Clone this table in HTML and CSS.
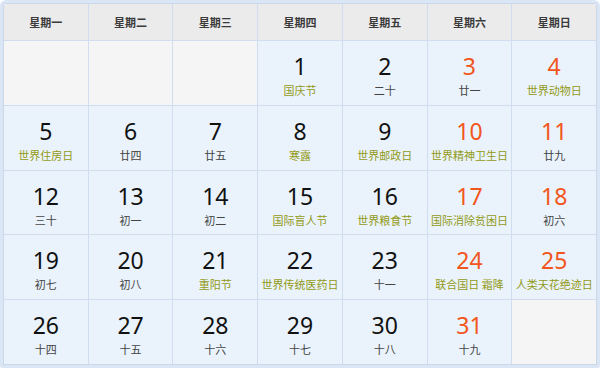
FILE: index.html
```html
<!DOCTYPE html>
<html lang="zh">
<head>
<meta charset="utf-8">
<link rel="stylesheet" href="styles.css">
</head>
<body>
<div class="cal">
  <div class="head">星期一</div>
  <div class="head">星期二</div>
  <div class="head">星期三</div>
  <div class="head">星期四</div>
  <div class="head">星期五</div>
  <div class="head">星期六</div>
  <div class="head">星期日</div>

  <div class="cell empty"></div>
  <div class="cell empty"></div>
  <div class="cell empty"></div>
  <div class="cell"><span class="num">1</span><span class="fest">国庆节</span></div>
  <div class="cell"><span class="num">2</span><span class="lunar">二十</span></div>
  <div class="cell"><span class="num we">3</span><span class="lunar">廿一</span></div>
  <div class="cell"><span class="num we">4</span><span class="fest">世界动物日</span></div>

  <div class="cell"><span class="num">5</span><span class="fest">世界住房日</span></div>
  <div class="cell"><span class="num">6</span><span class="lunar">廿四</span></div>
  <div class="cell"><span class="num">7</span><span class="lunar">廿五</span></div>
  <div class="cell"><span class="num">8</span><span class="fest">寒露</span></div>
  <div class="cell"><span class="num">9</span><span class="fest">世界邮政日</span></div>
  <div class="cell"><span class="num we">10</span><span class="fest">世界精神卫生日</span></div>
  <div class="cell"><span class="num we">11</span><span class="lunar">廿九</span></div>

  <div class="cell"><span class="num">12</span><span class="lunar">三十</span></div>
  <div class="cell"><span class="num">13</span><span class="lunar">初一</span></div>
  <div class="cell"><span class="num">14</span><span class="lunar">初二</span></div>
  <div class="cell"><span class="num">15</span><span class="fest">国际盲人节</span></div>
  <div class="cell"><span class="num">16</span><span class="fest">世界粮食节</span></div>
  <div class="cell"><span class="num we">17</span><span class="fest">国际消除贫困日</span></div>
  <div class="cell"><span class="num we">18</span><span class="lunar">初六</span></div>

  <div class="cell"><span class="num">19</span><span class="lunar">初七</span></div>
  <div class="cell"><span class="num">20</span><span class="lunar">初八</span></div>
  <div class="cell"><span class="num">21</span><span class="fest">重阳节</span></div>
  <div class="cell"><span class="num">22</span><span class="fest">世界传统医药日</span></div>
  <div class="cell"><span class="num">23</span><span class="lunar">十一</span></div>
  <div class="cell"><span class="num we">24</span><span class="fest">联合国日 霜降</span></div>
  <div class="cell"><span class="num we">25</span><span class="fest">人类天花绝迹日</span></div>

  <div class="cell"><span class="num">26</span><span class="lunar">十四</span></div>
  <div class="cell"><span class="num">27</span><span class="lunar">十五</span></div>
  <div class="cell"><span class="num">28</span><span class="lunar">十六</span></div>
  <div class="cell"><span class="num">29</span><span class="lunar">十七</span></div>
  <div class="cell"><span class="num">30</span><span class="lunar">十八</span></div>
  <div class="cell"><span class="num we">31</span><span class="lunar">十九</span></div>
  <div class="cell empty"></div>
</div>
</body>
</html>
```
FILE: styles.css
```css
* { box-sizing: border-box; }
html, body { margin: 0; padding: 0; background: #ffffff; }
body { width: 600px; height: 368px; overflow: hidden; }
.cal {
  width: 600px;
  height: 368px;
  display: grid;
  grid-template-columns: repeat(7, 1fr);
  grid-template-rows: 36px repeat(5, 1fr);
  gap: 1px;
  background: #d0ddee;
  border: 3px solid #dbe6f4;
  border-radius: 6px 6px 2px 2px;
  box-shadow: inset 0 0 0 1px #c9d8ec;
  padding: 1px;
  font-family: "Noto Sans", "Noto Sans CJK SC", sans-serif;
}
.head {
  background: #ebebeb;
  display: flex;
  align-items: center;
  justify-content: center;
  font-family: "Noto Sans CJK SC", sans-serif;
  font-size: 11px;
  font-weight: bold;
  color: #3a3a3a;
}
.cell {
  background: #eaf3fb;
  display: flex;
  flex-direction: column;
  align-items: center;
  padding-top: 9px;
}
.cell.empty { background: #f5f5f5; }
.num {
  font-size: 23px;
  line-height: 32px;
  color: #111111;
}
.num.we { color: #f2561c; }
.fest, .lunar {
  font-family: "Noto Sans CJK SC", sans-serif;
  font-size: 11px;
  line-height: 16px;
}
.fest { color: #929a18; }
.lunar { color: #444444; }
```
